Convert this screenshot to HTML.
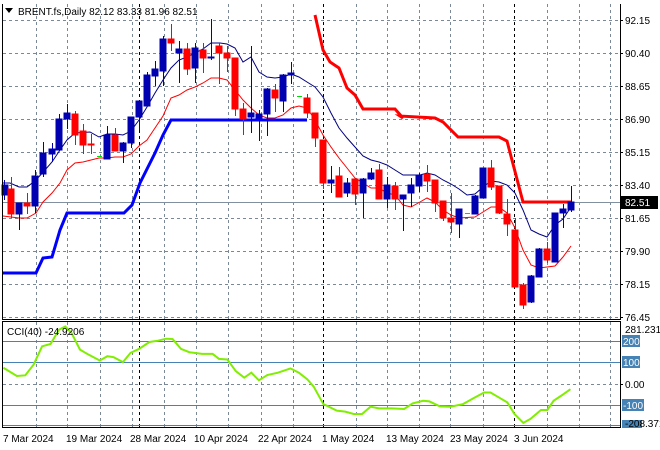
<!DOCTYPE html>
<html><head><meta charset="utf-8"><style>
html,body{margin:0;padding:0;background:#fff;}
svg{display:block;font-family:"Liberation Sans",sans-serif;}
</style></head><body>
<svg width="660" height="450" viewBox="0 0 660 450" xmlns="http://www.w3.org/2000/svg">
<rect width="660" height="450" fill="#fff"/>
<!-- horizontal grid main -->
<g stroke="#7a8898" stroke-width="1" stroke-dasharray="3,3" shape-rendering="crispEdges">
<line x1="3" y1="20.5" x2="620" y2="20.5"/><line x1="3" y1="53.5" x2="620" y2="53.5"/>
<line x1="3" y1="86.5" x2="620" y2="86.5"/><line x1="3" y1="119.5" x2="620" y2="119.5"/>
<line x1="3" y1="152.5" x2="620" y2="152.5"/><line x1="3" y1="185.5" x2="620" y2="185.5"/>
<line x1="3" y1="218.5" x2="620" y2="218.5"/><line x1="3" y1="251.5" x2="620" y2="251.5"/>
<line x1="3" y1="284.5" x2="620" y2="284.5"/><line x1="3" y1="317.5" x2="620" y2="317.5"/>
<line x1="3" y1="384.5" x2="620" y2="384.5"/>
</g>
<!-- vertical grid -->
<g stroke="#7a8898" stroke-width="1" stroke-dasharray="3,3" shape-rendering="crispEdges">
<path d="M36.5 4V427M67.5 4V427M100.5 4V427M132.5 4V427M164.5 4V427M196.5 4V427M228.5 4V427M261.5 4V427M293.5 4V427M356.5 4V427M387.5 4V427M419.5 4V427M450.5 4V427M483.5 4V427M547.5 4V427M579.5 4V427M610.5 4V427"/>
</g>
<g stroke="#000" stroke-width="1" stroke-dasharray="3,3" shape-rendering="crispEdges">
<path d="M139.5 4V427M323.5 4V427M514.5 4V427"/>
</g>
<!-- current price line -->
<line x1="3" y1="202.5" x2="620" y2="202.5" stroke="#8090a0" stroke-width="1"/>
<!-- thick blue line -->
<polyline fill="none" stroke="#0000ff" stroke-width="3" points="3,273 36,273 43,258 52,257 60,230 67,213 124,213 132,205 140,183 155,153 163,135 171,120 307,120"/>
<!-- thick red line -->
<polyline fill="none" stroke="#ff0000" stroke-width="3" points="315,15 323,50 330,62 339,68 347,88 355,95 363,109 395,109 403,118 400,116 435,118 443,122 458,137 499,137 507,141 523,202 571,202"/>
<!-- navy MA -->
<polyline fill="none" stroke="#000080" stroke-width="1" points="3,183 10,183 19,187 27,187 36,180 45,170 52,162 60,150 67,140 75,133 90,132 99,137 107,134 115,134 123,135 131,131 139,120 147,107 155,93 163,80 171,68 179,60 187,57 203,49 211,43 220,43 227,44 235,48 243,62 251,57 259,72 267,77 275,78 283,77 291,74 299,77 307,82 315,87 323,97 331,113 339,128 347,138 355,147 363,156 371,160 379,162 387,165 395,170 403,175 420,175 427,173 435,175 443,180 451,184 459,189 467,195 475,194 483,187 491,181 499,182 507,185 515,193 523,210 531,230 539,234 547,237 555,225 563,219 571,207"/>
<!-- red MA -->
<polyline fill="none" stroke="#ff0000" stroke-width="1" points="3,216 19,218 27,218 36,213 43,202 52,193 60,183 67,170 75,163 83,162 99,158 107,158 115,157 123,157 131,154 139,146 147,140 155,128 163,116 171,98 179,95 187,90 195,87 203,83 211,78 219,78 227,80 235,90 243,100 251,108 259,115 267,118 275,118 283,115 291,108 299,106 307,108 315,120 323,135 331,147 339,158 347,168 355,178 363,183 371,188 379,188 387,193 395,195 403,205 411,207 420,202 427,198 435,202 443,210 451,215 459,218 475,217 483,212 491,207 499,207 507,213 515,228 523,250 531,265 539,268 555,266 563,257 571,246"/>
<!-- candles -->
<g shape-rendering="crispEdges">
<g fill="#0000b0" stroke="#0000b0">
<path stroke-width="1" fill="none" d="M4.5 180V200M19.5 203V230M35.5 170V213M43.5 142V177M52.5 143V162M59.5 114V150M67.5 104V129M107.5 126V159M123.5 142V163M131.5 117V148M139.5 101V130M147.5 72V106M155.5 61V86M163.5 36V86M179.5 41V83M195.5 43V83M211.5 19V60M251.5 46V133M259.5 110V141M267.5 88V136M283.5 74V112M291.5 62V84M331.5 166V193M347.5 178V197M363.5 178V218M371.5 168V180M387.5 177V208M403.5 195V231M411.5 178V207M419.5 173V192M459.5 209V238M475.5 195V214M483.5 168V198M531.5 275V303M539.5 248V277M555.5 213V262M563.5 204V228M571.5 186V212"/>
<rect x="2" y="185" width="6" height="10"/><rect x="16" y="203" width="6" height="11"/><rect x="32" y="176" width="6" height="30"/><rect x="40" y="153" width="6" height="21"/><rect x="49" y="149" width="6" height="5"/><rect x="56" y="119" width="6" height="31"/><rect x="64" y="113" width="6" height="6"/><rect x="104" y="135" width="6" height="24"/><rect x="120" y="143" width="6" height="8"/><rect x="128" y="117" width="6" height="26"/><rect x="136" y="101" width="6" height="16"/><rect x="144" y="75" width="6" height="31"/><rect x="152" y="69" width="6" height="7"/><rect x="160" y="39" width="6" height="32"/><rect x="176" y="49" width="6" height="4"/><rect x="192" y="48" width="6" height="20"/><rect x="208" y="57" width="6" height="1"/><rect x="248" y="113" width="6" height="4"/><rect x="256" y="114" width="6" height="4"/><rect x="264" y="89" width="6" height="25"/><rect x="280" y="75" width="6" height="26"/><rect x="288" y="73" width="6" height="2"/><rect x="328" y="180" width="6" height="3"/><rect x="344" y="183" width="6" height="10"/><rect x="360" y="179" width="6" height="14"/><rect x="368" y="173" width="6" height="6"/><rect x="384" y="185" width="6" height="14"/><rect x="400" y="195" width="6" height="4"/><rect x="408" y="185" width="6" height="8"/><rect x="416" y="175" width="6" height="11"/><rect x="456" y="209" width="6" height="15"/><rect x="472" y="196" width="6" height="18"/><rect x="480" y="168" width="6" height="30"/><rect x="528" y="276" width="6" height="26"/><rect x="536" y="249" width="6" height="28"/><rect x="552" y="213" width="6" height="49"/><rect x="560" y="209" width="6" height="4"/><rect x="568" y="202" width="6" height="8"/>
</g>
<g fill="#ff0000" stroke="#ff0000">
<path stroke-width="1" fill="none" d="M11.5 177V218M27.5 193V214M75.5 111V145M83.5 124V154M91.5 134V154M115.5 128V151M171.5 24V51M187.5 43V75M203.5 43V73M219.5 43V84M227.5 46V72M235.5 58V116M243.5 103V135M275.5 84V112M307.5 94V118M315.5 113V147M323.5 140V189M339.5 167V197M355.5 178V205M379.5 164V199M395.5 182V210M427.5 165V192M435.5 180V212M443.5 201V221M451.5 193V233M491.5 160V190M499.5 186V214M507.5 199V236M515.5 218V287M523.5 283V309M547.5 242V263"/>
<rect x="8" y="189" width="6" height="25"/><rect x="24" y="203" width="6" height="3"/><rect x="72" y="114" width="6" height="21"/><rect x="80" y="131" width="6" height="14"/><rect x="88" y="144" width="6" height="1"/><rect x="112" y="135" width="6" height="16"/><rect x="168" y="39" width="6" height="4"/><rect x="184" y="49" width="6" height="20"/><rect x="200" y="50" width="6" height="8"/><rect x="216" y="46" width="6" height="7"/><rect x="224" y="53" width="6" height="5"/><rect x="232" y="58" width="6" height="51"/><rect x="240" y="109" width="6" height="10"/><rect x="272" y="90" width="6" height="8"/><rect x="304" y="98" width="6" height="15"/><rect x="312" y="113" width="6" height="25"/><rect x="320" y="140" width="6" height="43"/><rect x="336" y="176" width="6" height="21"/><rect x="352" y="179" width="6" height="15"/><rect x="376" y="170" width="6" height="29"/><rect x="392" y="186" width="6" height="13"/><rect x="424" y="174" width="6" height="7"/><rect x="432" y="180" width="6" height="23"/><rect x="440" y="201" width="6" height="17"/><rect x="448" y="218" width="6" height="4"/><rect x="488" y="168" width="6" height="19"/><rect x="496" y="186" width="6" height="27"/><rect x="504" y="214" width="6" height="10"/><rect x="512" y="230" width="6" height="57"/><rect x="520" y="285" width="6" height="20"/><rect x="544" y="249" width="6" height="11"/>
</g>
<g stroke="#00dd00"><path d="M97 156.5H102M297 96.5H302M465 213.5H470"/></g>
</g>
<!-- CCI -->
<g stroke="#4682b4" stroke-width="1" shape-rendering="crispEdges">
<line x1="3" y1="341.5" x2="620" y2="341.5"/><line x1="3" y1="362.5" x2="620" y2="362.5"/>
<line x1="3" y1="405.5" x2="620" y2="405.5"/><line x1="3" y1="425.5" x2="620" y2="425.5"/>
</g>
<g transform="translate(0,310) scale(0.421,0.33)">
<polyline fill="none" stroke="#80ee00" stroke-width="2" vector-effect="non-scaling-stroke" points="8,175 40,200 60,198 80,165 100,110 120,103 140,60 155,50 170,70 190,120 210,135 237,153 255,140 270,143 292,158 310,130 330,118 355,97 375,93 395,87 410,88 430,118 450,128 480,133 505,133 520,148 540,150 560,185 580,205 597,190 615,213 635,197 660,190 690,177 710,190 730,210 745,232 768,285 800,305 820,308 840,315 860,315 880,293 900,298 930,298 960,300 980,283 1005,275 1020,277 1045,292 1070,293 1100,285 1125,267 1150,250 1165,250 1185,265 1205,280 1222,315 1243,342 1260,330 1285,303 1300,303 1315,275 1335,258 1355,240"/>
</g>
<!-- frames -->
<g fill="none" stroke="#000" stroke-width="1" shape-rendering="crispEdges">
<path d="M2.5 4V319.5H620.5V4"/>
<rect x="2.5" y="321.5" width="618" height="106"/>
</g>
<!-- right axis ticks -->
<g stroke="#000" shape-rendering="crispEdges"><path d="M620 20.5h3M620 53.5h3M620 86.5h3M620 119.5h3M620 152.5h3M620 185.5h3M620 218.5h3M620 251.5h3M620 284.5h3M620 317.5h3M620 384.5h3"/></g>
<g font-size="10" fill="#000">
<text x="625" y="24">92.15</text><text x="625" y="57">90.40</text><text x="625" y="90">88.65</text>
<text x="625" y="123">86.90</text><text x="625" y="156">85.15</text><text x="625" y="189">83.40</text>
<text x="625" y="222">81.65</text><text x="625" y="255">79.90</text><text x="625" y="288">78.15</text>
<text x="625" y="321">76.45</text>
<text x="625" y="333">281.2317</text><text x="625" y="388">0.00</text>
</g>
<rect x="621" y="196" width="37" height="13" fill="#000"/>
<text x="625" y="206" font-size="10" fill="#fff">82.51</text>
<g fill="#4682b4"><rect x="622" y="335" width="18" height="12"/><rect x="622" y="356" width="18" height="12"/><rect x="622" y="399" width="22" height="12"/><rect x="622" y="420" width="20" height="8"/></g>
<g font-size="10" fill="#fff"><text x="623" y="345">200</text><text x="623" y="366">100</text><text x="623" y="409">-100</text></g>
<text x="625" y="427" font-size="10" fill="#000">-208.371</text>
<!-- title -->
<path d="M5 8h8l-4 5z" fill="#000"/>
<text x="18" y="15" font-size="10" fill="#000">BRENT.fs,Daily  82.12 83.33 81.96 82.51</text>
<text x="7" y="335" font-size="10" fill="#000">CCI(40) -24.9206</text>
<!-- dates -->
<g font-size="10" fill="#000">
<text x="3" y="442">7 Mar 2024</text><text x="66" y="442">19 Mar 2024</text><text x="130" y="442">28 Mar 2024</text>
<text x="194" y="442">10 Apr 2024</text><text x="258" y="442">22 Apr 2024</text><text x="322" y="442">1 May 2024</text>
<text x="386" y="442">13 May 2024</text><text x="450" y="442">23 May 2024</text><text x="514" y="442">3 Jun 2024</text>
</g>
</svg>
</body></html>
